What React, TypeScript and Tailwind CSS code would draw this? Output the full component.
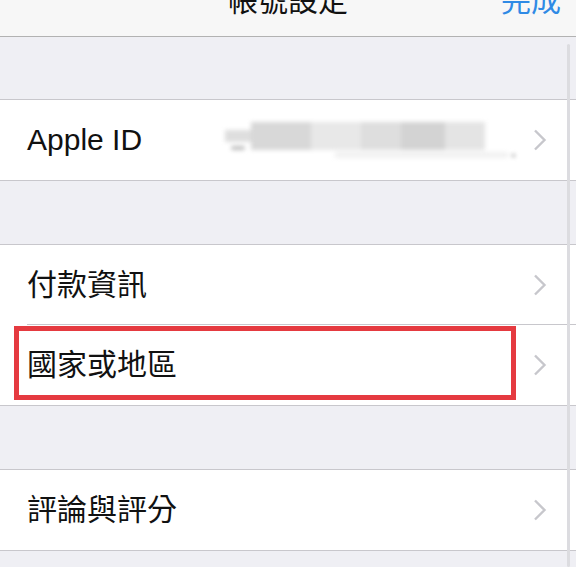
import React from "react"

const font = { fontFamily: '"Liberation Sans", "Noto Sans CJK TC", sans-serif' }

const Chevron = () => (
  <svg width="14" height="22" viewBox="0 0 14 22" className="shrink-0">
    <path d="M2 1.5 L11.5 11 L2 20.5" fill="none" stroke="#c7c7cc" strokeWidth="2.4" />
  </svg>
)

const Gap = () => <div className="h-[63px] bg-[#efeff4]" />

const Line = () => <div className="h-px bg-[#c8c7cc]" />

const Row = ({
  label,
  inset,
  children,
  highlight,
}: {
  label: string
  inset?: boolean
  children?: React.ReactNode
  highlight?: boolean
}) => (
  <div className="relative flex h-[80px] flex-col bg-white">
    <div className="flex flex-1 items-center pl-[27px] pr-[29px]">
      <span className="text-[30px] leading-none text-[#111]">{label}</span>
      <div className="flex flex-1 items-center justify-end">{children}</div>
      <Chevron />
    </div>
    {inset && <div className="ml-[27px] h-px bg-[#c8c7cc]" />}
    {highlight && (
      <div className="absolute left-[14px] top-[1px] h-[74px] w-[502px] border-[5px] border-[#e53a40]" />
    )}
  </div>
)

// pixelated / blurred email address
const Blurred = () => (
  <div className="mr-[18px] flex h-[40px] w-[290px] flex-col justify-center gap-[2px] blur-[2px]">
    <div className="flex h-[28px] items-stretch">
      <div className="mt-[8px] flex w-[26px] flex-col">
        <div className="h-[14px] bg-[#dedede]" />
        <div className="mx-[6px] mt-[4px] h-[4px] rounded-full bg-[#bdbdbd]" />
      </div>
      <div className="w-[60px] bg-[#d8d8d8]" />
      <div className="w-[50px] bg-[#e8e8e8]" />
      <div className="w-[40px] bg-[#dedede]" />
      <div className="w-[44px] bg-[#d3d3d3]" />
      <div className="w-[40px] bg-[#e4e4e4]" />
    </div>
    <div className="flex h-[6px] items-center pl-[110px]">
      <div className="h-full flex-1 bg-[#f1f1f1]" />
      <div className="ml-[4px] h-[3px] w-[3px] rounded-full bg-[#888]" />
    </div>
  </div>
)

export default function App() {
  return (
    <div className="relative flex h-[567px] w-[576px] overflow-hidden bg-[#efeff4]" style={font}>
      <div className="flex flex-1 flex-col">
        <div className="flex h-[37px] items-end border-b border-[#b2b2b2] bg-[#f7f7f7] px-[15px] pb-[20px]">
          <div className="flex-1" />
          <span className="text-[30px] leading-none text-[#111]">帳號設定</span>
          <div className="flex flex-1 justify-end">
            <span className="text-[30px] leading-none text-[#2f8ae5]">完成</span>
          </div>
        </div>
        <div className="h-[62px]" />
        <Line />
        <Row label="Apple ID">
          <Blurred />
        </Row>
        <Line />
        <Gap />
        <Line />
        <Row label="付款資訊" inset />
        <Row label="國家或地區" highlight />
        <Line />
        <Gap />
        <Line />
        <Row label="評論與評分" />
        <Line />
      </div>
      {/* scroll indicator overlay */}
      <div className="absolute right-[6px] top-[44px] bottom-0 w-[3px] rounded-full bg-[#dcdce0]" />
    </div>
  )
}
